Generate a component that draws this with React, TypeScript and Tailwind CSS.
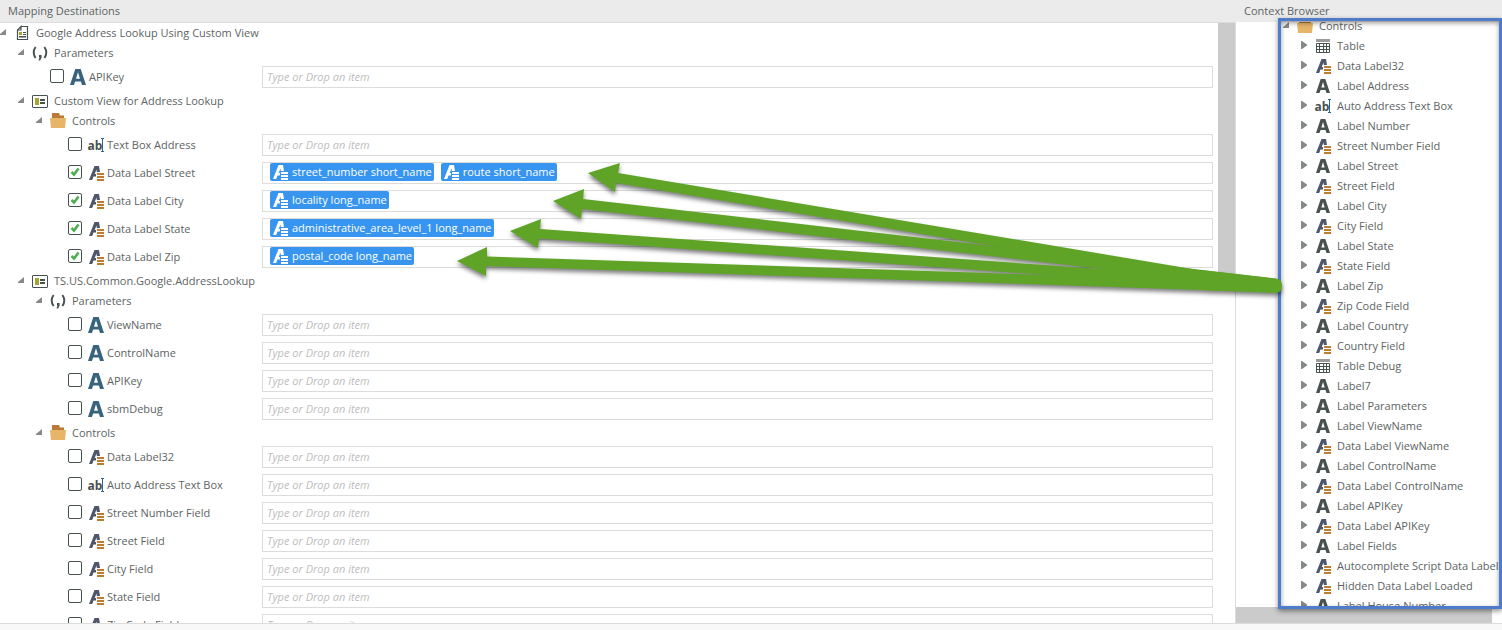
import React from "react";

type IconKind = "page" | "params" | "view" | "folder" | "label" | "data" | "text" | "table";

function Icon({ kind, blue = false, white = false }: { kind: IconKind; blue?: boolean; white?: boolean }) {
  const common = "block h-4 w-4 shrink-0";
  const dark = "#47514f";
  switch (kind) {
    case "page":
      return (
        <svg viewBox="0 0 16 16" className={common} aria-hidden="true">
          <path d="M7 1.500h6.500v13h-10V5L7 1.500V5H3.500" fill="none" stroke={dark} strokeWidth="1.200" />
          <path d="M5 7h3v3H5z" fill="#a5a52f" />
          <path d="M9 7h3v1H9zM9 9h3v1H9zM5 11h7v1.500H5z" fill={dark} />
        </svg>
      );
    case "params":
      return (
        <svg viewBox="0 0 16 16" className={common} aria-hidden="true">
          <path d="M3.600 2Q-.2 7.500 3.600 13M12.400 2q3.800 5.500 0 11" fill="none" stroke={dark} strokeWidth="1.900" />
          <path d="M7 10h2.600v2.500L8.200 15.500H6.500L7.500 12.500H7z" fill={dark} />
        </svg>
      );
    case "view":
      return (
        <svg viewBox="0 0 16 16" className={common} aria-hidden="true">
          <rect x=".5" y="2.500" width="15" height="12" rx=".5" fill="#fff" stroke={dark} />
          <path d="M3 5h4v7H3z" fill="#a5a52f" />
          <path d="M8 6h5v2H8zM8 9h5v2H8z" fill={dark} />
        </svg>
      );
    case "folder":
      return (
        <svg viewBox="0 0 16 16" className={common} aria-hidden="true">
          <path d="M2 0h7l1 2.500h4V6H2z" fill="#b97b35" />
          <path d="M0 5h16l-1 10H1z" fill="#e7b568" />
        </svg>
      );
    case "table":
      return (
        <svg viewBox="0 0 16 16" className={common} aria-hidden="true">
          <path d="M1 1h14v3H1z" fill="#9a9a9a" />
          <path d="M1.500 5.500h13v9h-13zM1 8.500h14M1 11.500h14M4.500 5v10M8.500 5v10M11.500 5v10" fill="none" stroke={dark} />
        </svg>
      );
    case "text":
      return (
        <svg viewBox="0 0 16 16" className={common + " overflow-visible"} aria-hidden="true">
          <text x="-.5" y="13" fontFamily="Open Sans, sans-serif" fontWeight="700" fontSize="12" fill={dark}>ab</text>
          <path d="M13 1.500h3M13 14.500h3M14.500 1.500v13" stroke="#35647f" fill="none" />
        </svg>
      );
    case "data":
      return (
        <svg viewBox="0 0 16 16" className={common} aria-hidden="true">
          <path d="M1 15 6.500 1H11l1 6H8.800L8.500 4.500 6.700 9H8v2.500H5.500L4.200 15z" fill={white ? "#fff" : "#4d566b"} />
          <path d="M9 8h7v2H9zM9 11h7v2H9zM9 14h7v2H9z" fill={white ? "#fff" : "#bd7c34"} />
        </svg>
      );
    default:
      return blue ? (
        <svg viewBox="0 0 16 16" className={common} aria-hidden="true">
          <path d="M0 16 5.300 0h5.400L16 16h-4l-1.100-3.500H5.100L4 16H0Zm6-6.300h4L8 3.300 6 9.700Z" fill="#38637d" />
        </svg>
      ) : (
        <svg viewBox="0 0 16 16" className={common} aria-hidden="true">
          <path d="M1 15 5.700 1h4.600L15 15h-3.500l-1-3h-5l-1 3H1Zm5.300-5.500h3.400L8 4 6.300 9.500Z" fill={dark} />
        </svg>
      );
  }
}

function Expanded() {
  return (
    <svg viewBox="0 0 7 6" className="mb-[2px] block h-[6px] w-[7px] shrink-0" aria-hidden="true">
      <path d="M6 0v6H0V5z" fill="#858a89" />
    </svg>
  );
}

function Collapsed() {
  return (
    <svg viewBox="0 0 6 8" className="mb-[2px] block h-2 w-[6px] shrink-0" aria-hidden="true">
      <path d="M0 0h1l5 3.500v1L1 8H0z" fill="#858a89" />
    </svg>
  );
}

type Row = { level: 0 | 1 | 2 | 3; icon: IconKind; label: string; leaf?: boolean; chips?: string[] };

const rows: Row[] = [
  { level: 0, icon: "page", label: "Google Address Lookup Using Custom View" },
  { level: 1, icon: "params", label: "Parameters" },
  { level: 2, icon: "label", label: "APIKey", leaf: true },
  { level: 1, icon: "view", label: "Custom View for Address Lookup" },
  { level: 2, icon: "folder", label: "Controls" },
  { level: 3, icon: "text", label: "Text Box Address", leaf: true },
  { level: 3, icon: "data", label: "Data Label Street", leaf: true, chips: ["street_number short_name", "route short_name"] },
  { level: 3, icon: "data", label: "Data Label City", leaf: true, chips: ["locality long_name"] },
  { level: 3, icon: "data", label: "Data Label State", leaf: true, chips: ["administrative_area_level_1 long_name"] },
  { level: 3, icon: "data", label: "Data Label Zip", leaf: true, chips: ["postal_code long_name"] },
  { level: 1, icon: "view", label: "TS.US.Common.Google.AddressLookup" },
  { level: 2, icon: "params", label: "Parameters" },
  { level: 3, icon: "label", label: "ViewName", leaf: true },
  { level: 3, icon: "label", label: "ControlName", leaf: true },
  { level: 3, icon: "label", label: "APIKey", leaf: true },
  { level: 3, icon: "label", label: "sbmDebug", leaf: true },
  { level: 2, icon: "folder", label: "Controls" },
  { level: 3, icon: "data", label: "Data Label32", leaf: true },
  { level: 3, icon: "text", label: "Auto Address Text Box", leaf: true },
  { level: 3, icon: "data", label: "Street Number Field", leaf: true },
  { level: 3, icon: "data", label: "Street Field", leaf: true },
  { level: 3, icon: "data", label: "City Field", leaf: true },
  { level: 3, icon: "data", label: "State Field", leaf: true },
  { level: 3, icon: "data", label: "Zip Code Field", leaf: true },
];

const groupIndent = ["pl-0", "pl-[18px]", "pl-[36px]", "pl-[54px]"];
const leafIndent = ["pl-[14px]", "pl-[32px]", "pl-[50px]", "pl-[68px]"];

const context: [IconKind, string][] = [
  ["table", "Table"],
  ["data", "Data Label32"],
  ["label", "Label Address"],
  ["text", "Auto Address Text Box"],
  ["label", "Label Number"],
  ["data", "Street Number Field"],
  ["label", "Label Street"],
  ["data", "Street Field"],
  ["label", "Label City"],
  ["data", "City Field"],
  ["label", "Label State"],
  ["data", "State Field"],
  ["label", "Label Zip"],
  ["data", "Zip Code Field"],
  ["label", "Label Country"],
  ["data", "Country Field"],
  ["table", "Table Debug"],
  ["label", "Label7"],
  ["label", "Label Parameters"],
  ["label", "Label ViewName"],
  ["data", "Data Label ViewName"],
  ["label", "Label ControlName"],
  ["data", "Data Label ControlName"],
  ["label", "Label APIKey"],
  ["data", "Data Label APIKey"],
  ["label", "Label Fields"],
  ["data", "Autocomplete Script Data Label"],
  ["data", "Hidden Data Label Loaded"],
  ["label", "Label House Number"],
];

function GroupRow({ row }: { row: Row }) {
  return (
    <div className={"flex h-5 items-center " + groupIndent[row.level]}>
      <Expanded />
      <span className="ml-[7px] mr-[6px]">
        <Icon kind={row.icon} />
      </span>
      <span>{row.label}</span>
    </div>
  );
}

function LeafRow({ row, id }: { row: Row; id: string }) {
  return (
    <div className="flex h-7 items-center">
      <div className={"flex w-[262px] shrink-0 items-center " + leafIndent[row.level]}>
        <span className="mb-[2px] grid shrink-0">
          <input
            id={id}
            type="checkbox"
            defaultChecked={!!row.chips}
            className="peer col-start-1 row-start-1 h-[14px] w-[14px] appearance-none rounded-[2px] border border-[#47514f] bg-white"
          />
          <svg viewBox="0 0 14 14" className="pointer-events-none col-start-1 row-start-1 hidden h-[14px] w-[14px] peer-checked:block" aria-hidden="true">
            <path d="M3.500 7 6 9.500l4.500-6" fill="none" stroke="#4caf50" strokeWidth="2.600" />
          </svg>
        </span>
        <label htmlFor={id} className="flex items-center gap-[3px] pl-[6px]">
          <Icon kind={row.icon} blue />
          {row.label}
        </label>
      </div>
      {row.chips ? (
        <div className="mr-[5px] flex h-[22px] min-w-0 flex-1 items-start gap-[7px] border border-[#dcdcdc] bg-white pl-[7px]">
          {row.chips.map((chip) => (
            <button key={chip} type="button" className="flex h-[18px] items-center gap-1 rounded-[2px] bg-[#3795f0] px-[2px] text-white">
              <Icon kind="data" white />
              {chip}
            </button>
          ))}
        </div>
      ) : (
        <input
          type="text"
          aria-label={row.label}
          placeholder="Type or Drop an item"
          className="mr-[5px] h-[22px] min-w-0 flex-1 border border-[#dcdcdc] bg-white px-1 pb-[2px] placeholder:italic placeholder:text-[#bdbdbd]"
        />
      )}
    </div>
  );
}

const arrows = [
  "M588 173 620 163 618 173 1276 283 1276 293 616 183 615 192Z",
  "M553 201 584 189 583 199 1276 278.500 1276 289 582 209 581 219Z",
  "M510 231 541 219 540 229 1276 281.500 1276 291.500 539 238.500 538 248Z",
  "M457 261 487 247 487 256.500 1276 282.500 1276 292.500 486 266 486 276Z",
];

export default function App() {
  return (
    <div className="relative flex h-screen flex-col overflow-hidden bg-[#f8f8f8] font-['Open_Sans',sans-serif] text-[11px] leading-4 text-[#5d6463]">
      <header className="flex h-[22px] shrink-0 items-center bg-[#ebebeb]">
        <h2 className="min-w-0 flex-1 pl-2">Mapping Destinations</h2>
        <h2 className="w-[258px]">Context Browser</h2>
      </header>

      <main className="flex min-h-0 flex-1 bg-white">
        <section className="flex min-w-0 flex-1 overflow-hidden border-y border-r border-[#dcdcdc]">
          <div className="min-w-0 flex-1">
            {rows.map((row, i) =>
              row.leaf ? <LeafRow key={i} row={row} id={"map-" + i} /> : <GroupRow key={i} row={row} />
            )}
          </div>
          <div className="h-[258px] w-[17px] shrink-0 bg-[#cbcbcb]" />
        </section>

        <aside className="flex w-[266px] shrink-0 flex-col border-b border-[#dcdcdc]">
          <div className="min-h-0 flex-1 overflow-hidden pl-[47px]">
            <div className="-mt-[6px] flex h-5 items-center">
              <Expanded />
              <span className="ml-[7px] mr-[6px]">
                <Icon kind="folder" />
              </span>
              Controls
            </div>
            {context.map(([kind, label]) => (
              <div key={label} className="flex h-5 items-center whitespace-nowrap pl-[18px]">
                <Collapsed />
                <span className="ml-2 mr-[6px]">
                  <Icon kind={kind} />
                </span>
                {label}
              </div>
            ))}
          </div>
          <div className="mr-[10px] h-4 shrink-0 bg-[#cbcbcb]" />
        </aside>
      </main>
      <footer className="h-[6px] shrink-0" />

      <div className="pointer-events-none absolute bottom-[21px] right-0 top-[18px] w-[224px] border-3 border-[#4f7bcb] shadow-[0_2px_5px_rgba(0,0,0,0.45),inset_0_2px_5px_rgba(0,0,0,0.4)]" />
      <svg
        viewBox="0 0 1502 630"
        className="pointer-events-none absolute left-0 top-0 h-[630px] w-[1502px] drop-shadow-[0_3px_2px_rgba(0,0,0,0.5)]"
        aria-hidden="true"
      >
        <g fill="#5fa427">
          {arrows.map((d) => (
            <path key={d} d={d} />
          ))}
          <path d="M1200 270 1278 279q4 1 4 7t-6 7l-76-3z" />
        </g>
      </svg>
    </div>
  );
}
